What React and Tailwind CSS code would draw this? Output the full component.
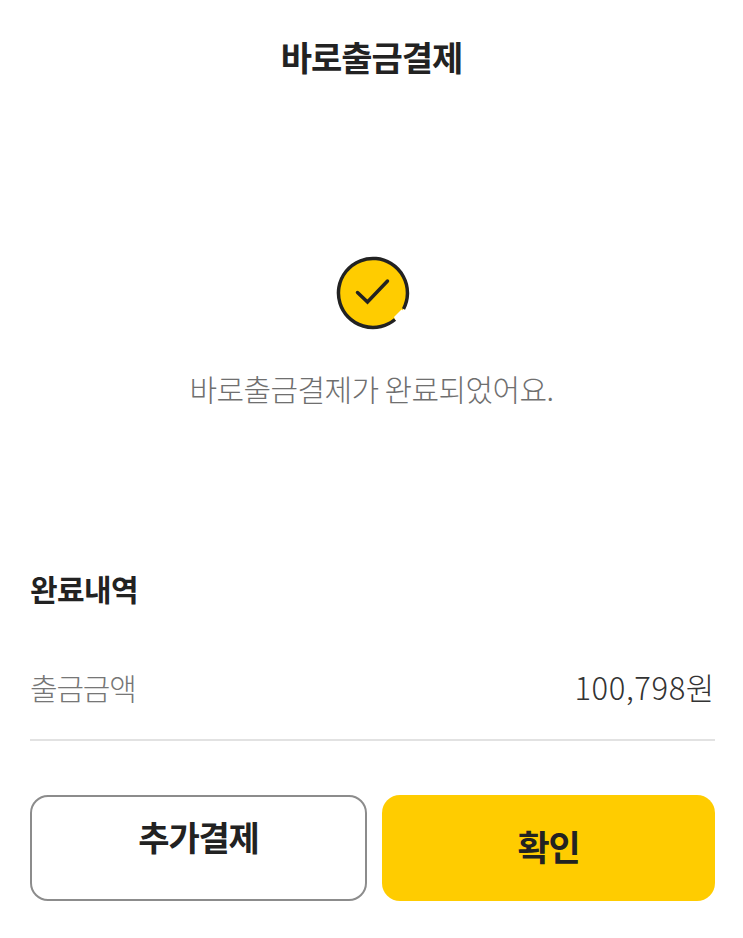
import React from "react";

const font = { fontFamily: '"Noto Sans CJK KR", "Noto Sans", sans-serif' };

export default function App() {
  return (
    <div style={font} className="w-[743px] h-[938px] bg-white flex flex-col overflow-hidden text-[#222222]">
      <div className="h-[114px] flex items-center justify-center">
        <h1 className="text-[34px] leading-[40px] font-bold tracking-[-1.05px]">바로출금결제</h1>
      </div>
      <div className="pt-[142px] pl-[2px] flex flex-col items-center">
        <svg width="74" height="74" viewBox="0 0 74 74" fill="none">
          <circle cx="37" cy="37" r="34.5" fill="#FFCC00" />
          <path d="M58 61 L65.5 53.5 L72 58 L62 70 Z" fill="#FFFFFF" />
          <path d="M59 63.5 A34.5 34.5 0 1 1 67.5 53" stroke="#222222" strokeWidth="3.5" strokeLinecap="butt" />
          <path d="M21.5 36.5 L31.5 46 L51.5 25" stroke="#222222" strokeWidth="3.5" strokeLinecap="round" strokeLinejoin="miter" />
        </svg>
      </div>
      <div className="flex justify-center">
        <p className="mt-[38px] text-[30px] leading-[40px] font-light tracking-[-0.6px] text-[#6f6f6f]">바로출금결제가 완료되었어요.</p>
      </div>
      <div className="mt-[160px] pl-[30px] pr-[28px]">
        <h2 className="text-[30px] leading-[40px] font-bold tracking-[-0.6px] text-[#222222]">완료내역</h2>
        <div className="mt-[59px] flex items-center justify-between h-[40px] pr-[-1px]">
          <span className="text-[30px] leading-[40px] font-light tracking-[-1.2px] text-[#767676]">출금금액</span>
          <span className="text-[31px] leading-[40px] font-light tracking-[0.6px] text-[#333333]">100,798원</span>
        </div>
        <div className="mt-[32px] h-[2px] bg-[#e2e2e2]"></div>
        <div className="mt-[54px] flex gap-[15px]">
          <button className="w-[337px] shrink-0 h-[106px] rounded-[18px] border-2 border-[#8c8c8c] bg-white pb-[24px] text-[34px] font-bold tracking-[-1.2px] text-[#222222]">추가결제</button>
          <button className="w-[333px] shrink-0 h-[106px] rounded-[18px] bg-[#FFCC00] pb-[4px] text-[35px] font-bold tracking-[-1.2px] text-[#222222]">확인</button>
        </div>
      </div>
    </div>
  );
}
